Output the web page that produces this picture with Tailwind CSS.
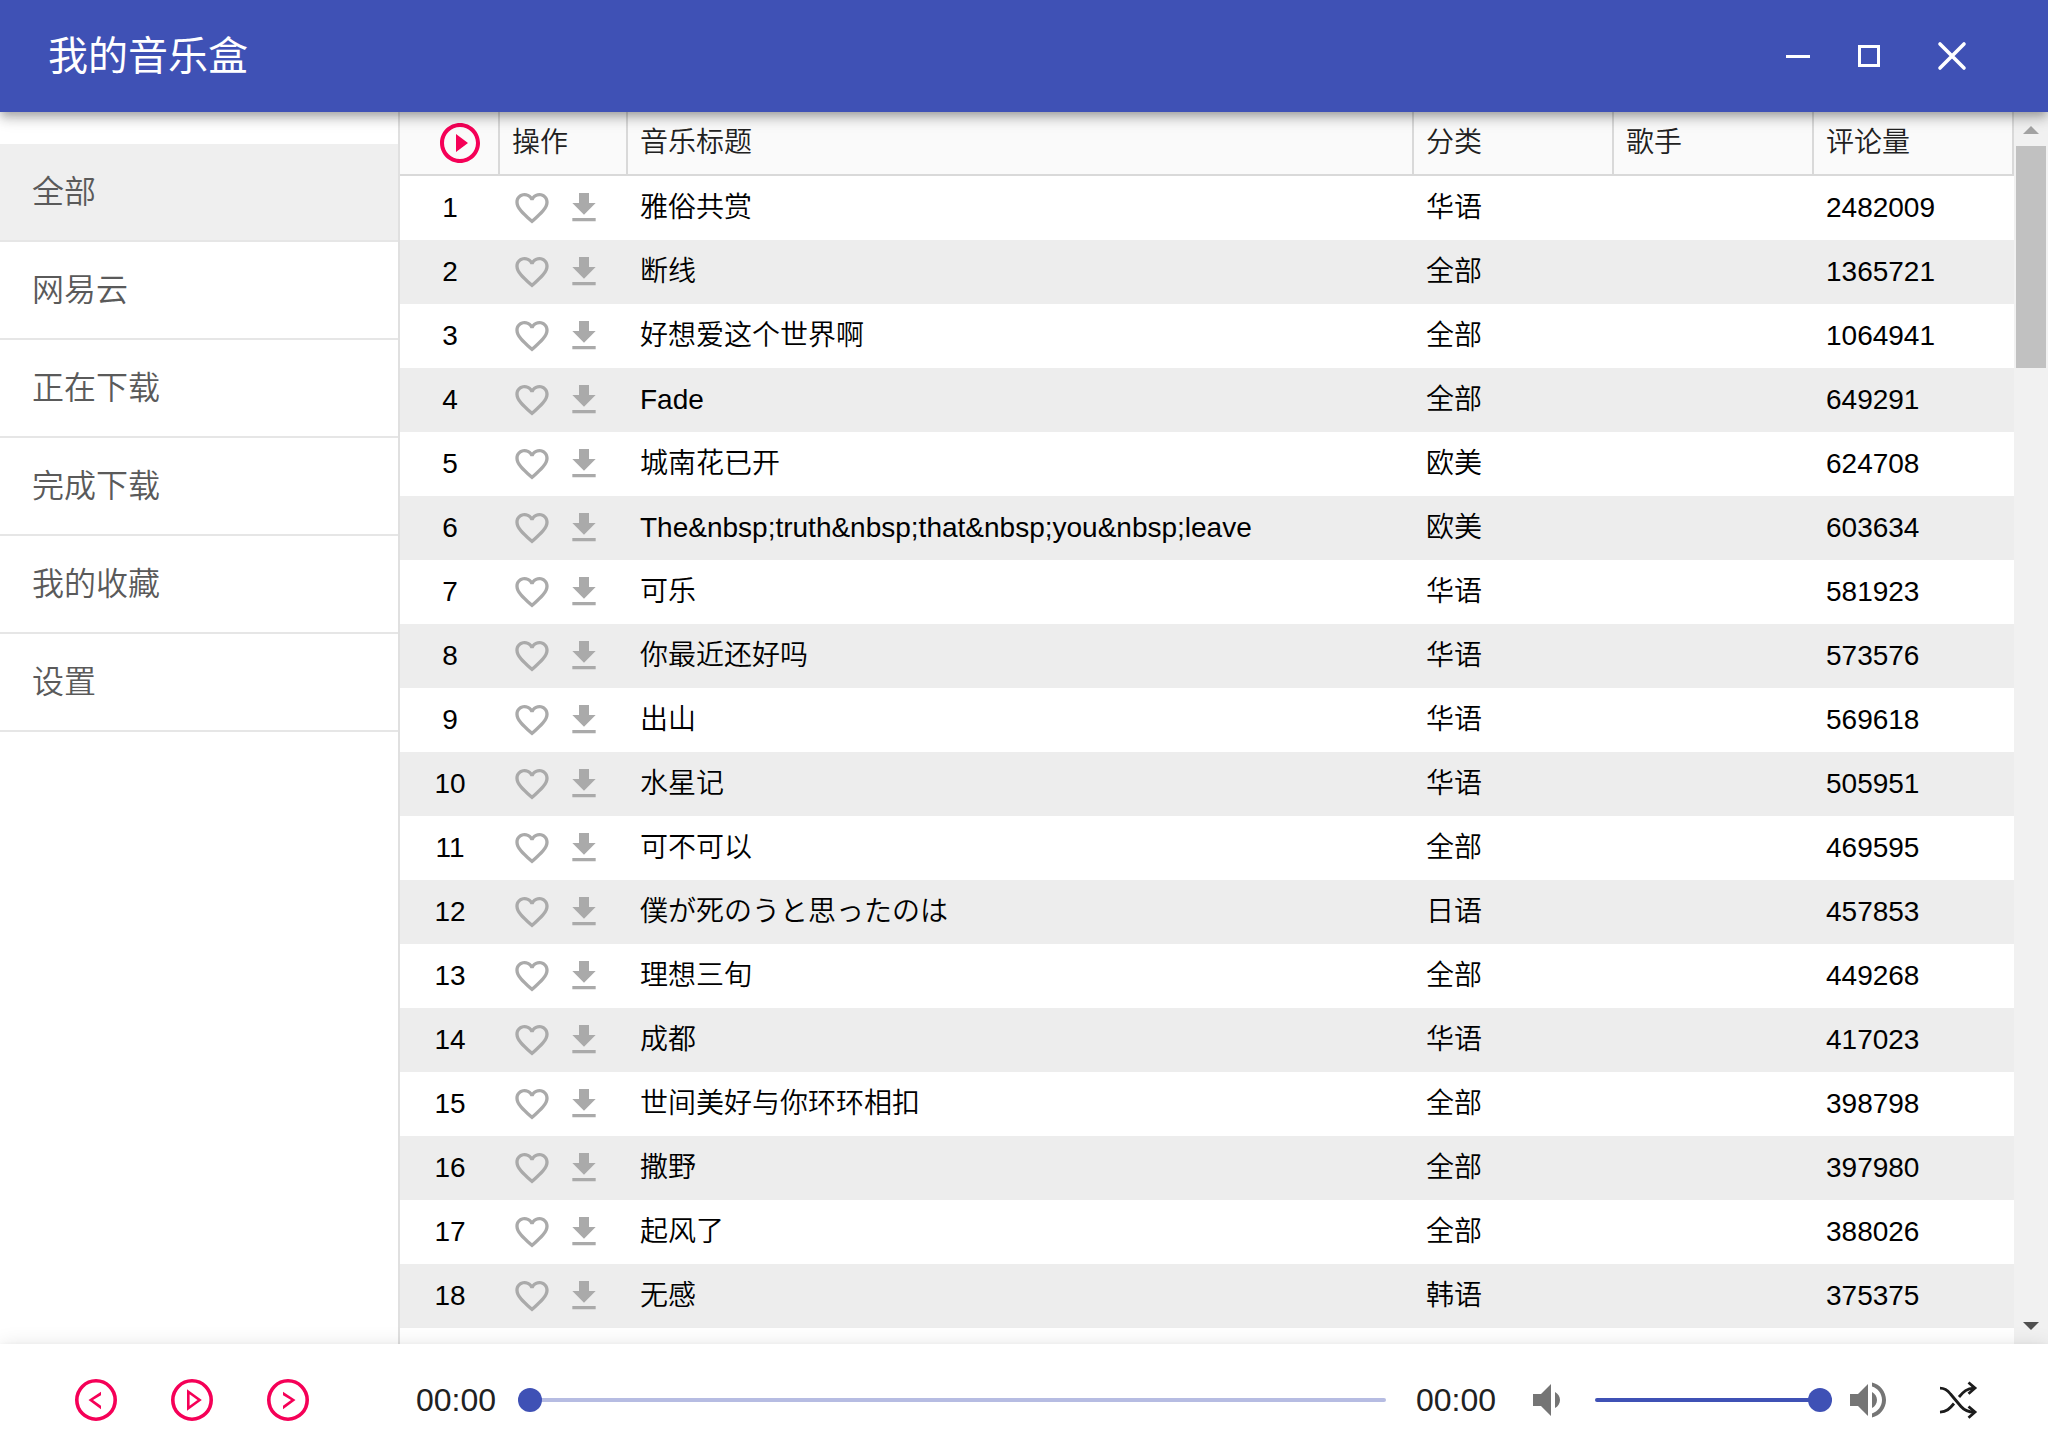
<!DOCTYPE html>
<html lang="zh-CN">
<head>
<meta charset="utf-8">
<meta name="viewport" content="width=device-width, initial-scale=1">
<title>我的音乐盒</title>
<script src="https://cdn.jsdelivr.net/npm/@tailwindcss/browser@4"></script>
</head>
<body class="flex h-screen flex-col overflow-hidden bg-white font-['Liberation_Sans','Noto_Sans_CJK_SC',sans-serif] font-[350] text-black">

<header class="relative z-10 flex h-28 shrink-0 items-center bg-[#3f51b5] pl-12 pr-[50px] text-white shadow-[0_4px_8px_-2px_rgba(0,0,0,0.2),0_8px_10px_0_rgba(0,0,0,0.14),0_2px_20px_0_rgba(0,0,0,0.12)]">
  <h1 class="flex-1 text-[40px] leading-[56px] font-normal">我的音乐盒</h1>
  <button type="button" aria-label="最小化" class="flex h-16 w-[72px] items-center justify-center">
    <svg class="size-8" viewBox="0 0 32 32" fill="currentColor"><rect x="4" y="15" width="24" height="3"/></svg>
  </button>
  <button type="button" aria-label="最大化" class="flex h-16 w-[72px] items-center justify-center">
    <svg class="size-8" viewBox="0 0 32 32" fill="none" stroke="currentColor" stroke-width="3"><rect x="5.5" y="6.500" width="19" height="19"/></svg>
  </button>
  <button type="button" aria-label="关闭" class="flex h-16 w-[92px] items-center justify-center">
    <svg class="size-8" viewBox="0 0 32 32" fill="none" stroke="currentColor" stroke-width="3.600" stroke-linecap="round"><path d="M4 4l24 24M28 4L4 28"/></svg>
  </button>
</header>

<main class="flex min-h-0 flex-1">
  <nav class="w-[400px] shrink-0 border-r-2 border-[#e0e0e0] pt-8 text-[32px] leading-[48px] text-[#5a5a5a]">
    <a href="#all" aria-current="page" class="block border-b-2 border-[#e6e6e6] bg-[#efefef] px-8 py-6">全部</a>
    <a href="#netease" class="block border-b-2 border-[#e6e6e6] px-8 py-6">网易云</a>
    <a href="#downloading" class="block border-b-2 border-[#e6e6e6] px-8 py-6">正在下载</a>
    <a href="#downloaded" class="block border-b-2 border-[#e6e6e6] px-8 py-6">完成下载</a>
    <a href="#favorites" class="block border-b-2 border-[#e6e6e6] px-8 py-6">我的收藏</a>
    <a href="#settings" class="block border-b-2 border-[#e6e6e6] px-8 py-6">设置</a>
  </nav>

  <div class="min-w-0 flex-1 overflow-hidden">
    <table class="w-full table-fixed border-separate border-spacing-0 text-[28px] leading-[40px]">
      <colgroup>
        <col class="w-[100px]"><col class="w-32"><col><col class="w-[200px]"><col class="w-[200px]"><col class="w-[200px]">
      </colgroup>
      <thead class="bg-[#fafafa] text-left text-[#212121]">
        <tr class="h-16">
          <th class="border-r-2 border-b-2 border-[#d9d9d9] p-0">
            <button type="button" aria-label="播放全部" class="ml-9 block text-[#f50057]">
              <svg class="size-12" viewBox="0 0 24 24" fill="currentColor"><path d="M10 16.500l6-4.500-6-4.500v9zM12 2C6.480 2 2 6.480 2 12s4.480 10 10 10 10-4.480 10-10S17.520 2 12 2zm0 18c-4.410 0-8-3.590-8-8s3.590-8 8-8 8 3.590 8 8-3.590 8-8 8z"/></svg>
            </button>
          </th>
          <th class="border-r-2 border-b-2 border-[#d9d9d9] px-3 py-0 font-[350]">操作</th>
          <th class="border-r-2 border-b-2 border-[#d9d9d9] px-3 py-0 font-[350]">音乐标题</th>
          <th class="border-r-2 border-b-2 border-[#d9d9d9] px-3 py-0 font-[350]">分类</th>
          <th class="border-r-2 border-b-2 border-[#d9d9d9] px-3 py-0 font-[350]">歌手</th>
          <th class="border-r-2 border-b-2 border-[#d9d9d9] px-3 py-0 font-[350]">评论量</th>
        </tr>
      </thead>
      <tbody id="songs"></tbody>
    </table>
  </div>

  <div class="flex w-[34px] shrink-0 flex-col items-center bg-[#f1f1f1]" aria-hidden="true">
    <div class="flex h-[34px] items-end pb-3">
      <svg class="h-2 w-4" viewBox="0 0 16 8"><path d="M8 0l8 8H0z" fill="#a3a3a3"/></svg>
    </div>
    <div class="h-[222px] w-[30px] bg-[#c1c1c1]"></div>
    <div class="flex flex-1 items-end pb-[14px]">
      <svg class="h-2 w-4" viewBox="0 0 16 8"><path d="M0 0h16L8 8z" fill="#505050"/></svg>
    </div>
  </div>
</main>

<footer class="relative z-10 flex h-28 shrink-0 items-center bg-white pr-[66px] text-[32px] leading-[48px] text-[#212121] shadow-[0_4px_8px_-2px_rgba(0,0,0,0.2),0_8px_10px_0_rgba(0,0,0,0.14),0_2px_20px_0_rgba(0,0,0,0.12)]">
  <div class="flex w-[416px] shrink-0 pl-12 text-[#f50057]">
    <button type="button" aria-label="上一首" class="flex h-24 w-24 items-center justify-center">
      <svg class="size-12" viewBox="0 0 48 48" fill="none" stroke="currentColor"><circle cx="24" cy="24" r="19.200" stroke-width="3.600"/><path d="M29 15.800v3.400L21 24l8 5.700v3.500L16.500 24z" fill="currentColor" stroke="none"/></svg>
    </button>
    <button type="button" aria-label="播放" class="flex h-24 w-24 items-center justify-center">
      <svg class="size-12" viewBox="0 0 48 48" fill="none" stroke="currentColor"><circle cx="24" cy="24" r="19.200" stroke-width="3.600"/><path d="M20.300 15.800v16.400L31.600 24z" stroke-width="2.600"/></svg>
    </button>
    <button type="button" aria-label="下一首" class="flex h-24 w-24 items-center justify-center">
      <svg class="size-12" viewBox="0 0 48 48" fill="none" stroke="currentColor"><circle cx="24" cy="24" r="19.200" stroke-width="3.600"/><path d="M19 15.800v3.400L27 24l-8 5.700v3.500L31.500 24z" fill="currentColor" stroke="none"/></svg>
    </button>
  </div>
  <span>00:00</span>
  <input type="range" min="0" max="100" value="0" aria-label="播放进度" class="ml-[22px] mr-[30px] h-6 min-w-0 flex-1 appearance-none bg-transparent [&::-webkit-slider-runnable-track]:h-1 [&::-webkit-slider-runnable-track]:rounded-full [&::-webkit-slider-runnable-track]:bg-[#b6bce2] [&::-webkit-slider-thumb]:-mt-[10px] [&::-webkit-slider-thumb]:size-6 [&::-webkit-slider-thumb]:appearance-none [&::-webkit-slider-thumb]:rounded-full [&::-webkit-slider-thumb]:bg-[#3f51b5]">
  <span>00:00</span>
  <svg class="ml-[27px] size-12 shrink-0" viewBox="0 0 24 24" fill="#757575"><path d="M18.500 12c0-1.770-1.020-3.290-2.500-4.030v8.050c1.480-.73 2.500-2.250 2.500-4.020zM5 9v6h4l5 5V4L9 9H5z"/></svg>
  <input type="range" min="0" max="100" value="100" aria-label="音量" class="ml-6 mr-3 h-6 w-[237px] shrink-0 appearance-none bg-transparent [&::-webkit-slider-runnable-track]:h-1 [&::-webkit-slider-runnable-track]:rounded-full [&::-webkit-slider-runnable-track]:bg-[#3f51b5] [&::-webkit-slider-thumb]:-mt-[10px] [&::-webkit-slider-thumb]:size-6 [&::-webkit-slider-thumb]:appearance-none [&::-webkit-slider-thumb]:rounded-full [&::-webkit-slider-thumb]:bg-[#3f51b5]">
  <svg class="size-12 shrink-0" viewBox="0 0 24 24" fill="#757575"><path d="M3 9v6h4l5 5V4L7 9H3zm13.500 3c0-1.770-1.020-3.290-2.500-4.030v8.050c1.480-.73 2.500-2.250 2.500-4.020zM14 3.230v2.060c2.890.86 5 3.540 5 6.710s-2.110 5.850-5 6.710v2.060c4.010-.91 7-4.490 7-8.770s-2.990-7.860-7-8.770z"/></svg>
  <button type="button" aria-label="随机播放" class="ml-[42px]">
    <svg class="size-12" viewBox="0 0 48 48" fill="none" stroke="#1c1c1c" stroke-width="2.800"><path d="M6 12.200c5 0 7.500 2 10.500 5.800L27 30.500c3.500 4 6.500 5.500 13 5.500M6 36.200c6.500-.4 9.500-3.200 14-8.700M25 21c4.500-5.500 8-8.500 15-8.900"/><path d="M34.500 6.500l6.500 5.600-6.500 5.600M34.500 30.500l6.500 5.600-6.500 5.600"/></svg>
  </button>
</footer>

<script>
const songs = [
  ['雅俗共赏', '华语', 2482009],
  ['断线', '全部', 1365721],
  ['好想爱这个世界啊', '全部', 1064941],
  ['Fade', '全部', 649291],
  ['城南花已开', '欧美', 624708],
  ['The&nbsp;truth&nbsp;that&nbsp;you&nbsp;leave', '欧美', 603634],
  ['可乐', '华语', 581923],
  ['你最近还好吗', '华语', 573576],
  ['出山', '华语', 569618],
  ['水星记', '华语', 505951],
  ['可不可以', '全部', 469595],
  ['僕が死のうと思ったのは', '日语', 457853],
  ['理想三旬', '全部', 449268],
  ['成都', '华语', 417023],
  ['世间美好与你环环相扣', '全部', 398798],
  ['撒野', '全部', 397980],
  ['起风了', '全部', 388026],
  ['无感', '韩语', 375375],
];
const esc = s => s.replace(/&/g, '&amp;');
document.getElementById('songs').innerHTML = songs.map(([title, kind, comments], i) => `
  <tr class="h-16 even:bg-[#ededed]">
    <td class="p-0 text-center">${i + 1}</td>
    <td class="px-3 py-0">
      <div class="flex gap-3 text-[#aaa]">
        <button type="button" aria-label="收藏"><svg class="size-10" viewBox="0 0 24 24" fill="currentColor"><path d="M16.500 3c-1.740 0-3.410.81-4.500 2.090C10.910 3.810 9.240 3 7.500 3 4.420 3 2 5.420 2 8.500c0 3.780 3.400 6.860 8.550 11.540L12 21.350l1.450-1.320C18.600 15.360 22 12.280 22 8.500 22 5.420 19.580 3 16.500 3zm-4.400 15.550l-.1.1-.1-.1C7.140 14.240 4 11.390 4 8.500 4 6.500 5.500 5 7.500 5c1.540 0 3.040.99 3.570 2.360h1.870C13.460 5.990 14.960 5 16.500 5c2 0 3.500 1.500 3.500 3.500 0 2.890-3.140 5.740-7.900 10.050z"/></svg></button>
        <button type="button" aria-label="下载"><svg class="size-10" viewBox="0 0 24 24" fill="currentColor"><path d="M19 9h-4V3H9v6H5l7 7 7-7zM5 18v2h14v-2H5z"/></svg></button>
      </div>
    </td>
    <td class="truncate px-3 py-0">${esc(title)}</td>
    <td class="px-3 py-0">${kind}</td>
    <td class="px-3 py-0"></td>
    <td class="px-3 py-0">${comments}</td>
  </tr>`).join('');
</script>
</body>
</html>
